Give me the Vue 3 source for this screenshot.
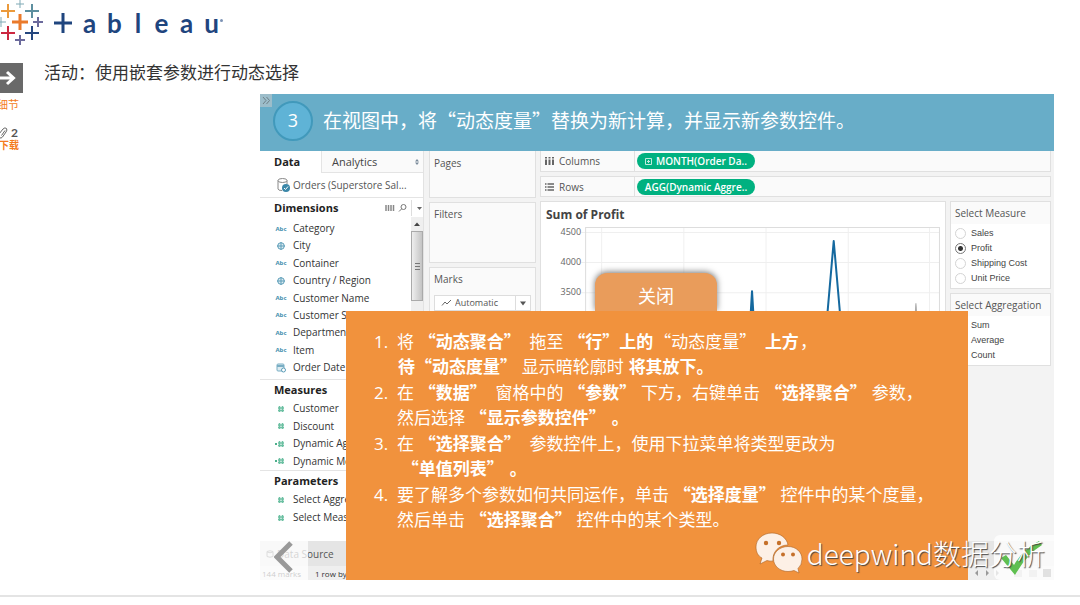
<script setup>
import { ref } from 'vue'

const crosses = [
  { x: 8, y: 11, r: 7, w: 2, c: '#eb9a3c' },
  { x: 20, y: 4, r: 4, w: 1, c: '#7fa9b5' },
  { x: 32, y: 11, r: 7, w: 2, c: '#5d8f9f' },
  { x: 1, y: 22, r: 5, w: 1, c: '#7fa9b5' },
  { x: 20, y: 22, r: 8, w: 3, c: '#ea7a2b' },
  { x: 38, y: 22, r: 5, w: 2, c: '#6b6a9c' },
  { x: 8, y: 33, r: 7, w: 2, c: '#cc2740' },
  { x: 32, y: 33, r: 7, w: 2, c: '#25477f' },
  { x: 20, y: 40, r: 5, w: 2, c: '#6b6a9c' }
]
const letters = ['a', 'b', 'l', 'e', 'a', 'u']

const dimensions = [
  { name: 'Category', kind: 'abc' },
  { name: 'City', kind: 'geo' },
  { name: 'Container', kind: 'abc' },
  { name: 'Country / Region', kind: 'geo' },
  { name: 'Customer Name', kind: 'abc' },
  { name: 'Customer Segment', kind: 'abc' },
  { name: 'Department', kind: 'abc' },
  { name: 'Item', kind: 'abc' },
  { name: 'Order Date', kind: 'date' }
]
const measures = [
  { name: 'Customer', calc: false },
  { name: 'Discount', calc: false },
  { name: 'Dynamic Aggregation', calc: true },
  { name: 'Dynamic Measure', calc: true }
]
const parameters = [
  { name: 'Select Aggregation', calc: false },
  { name: 'Select Measure', calc: false }
]
const measureOptions = ['Sales', 'Profit', 'Shipping Cost', 'Unit Price']
const aggregationOptions = ['Sum', 'Average', 'Count']
const measure = ref('Profit')
const aggregation = ref('Sum')
const ticks = [
  { label: '4500', y: 9 },
  { label: '4000', y: 39 },
  { label: '3500', y: 69 }
]
const columns = [60, 142, 224, 306, 387]
</script>

<template>
  <div class="page">
    <header class="brand" aria-label="tableau">
      <svg class="mark" width="44" height="45" viewBox="0 0 44 45">
        <path v-for="(c, i) in crosses" :key="i" :d="`M${c.x - c.r} ${c.y}H${c.x + c.r}M${c.x} ${c.y - c.r}V${c.y + c.r}`" :stroke="c.c" :stroke-width="c.w" />
      </svg>
      <svg class="plus" width="18" height="20" viewBox="0 0 18 20"><path d="M0 10H18M9 0V20" stroke="#1f457e" stroke-width="3" /></svg>
      <span class="word"><span v-for="(l, i) in letters" :key="i">{{ l }}</span></span>
      <span class="reg"></span>
    </header>

    <div class="body">
      <nav class="rail">
        <button class="expand" aria-label="展开">
          <svg width="16" height="16" viewBox="0 0 16 16"><path d="M0 8H13M7 2L13.500 8L7 14" fill="none" stroke="#fff" stroke-width="3" /></svg>
        </button>
        <a class="detail" href="#">细节</a>
        <div class="clip">
          <svg width="9" height="12" viewBox="0 0 9 12"><path d="M0 7L4 2Q6 0 7.500 1.500Q8.500 3 7 5L3.500 10Q2 12 .5 10.500M2.500 8.500L6 3.500" fill="none" stroke="#666" /></svg>
          <b>2</b>
        </div>
        <a class="download" href="#">下载</a>
      </nav>

      <main class="content">
        <h1>活动：使用嵌套参数进行动态选择</h1>

        <section class="stage">
          <div class="banner">
            <button class="chev" aria-label="收起"><svg width="8" height="7" viewBox="0 0 8 7"><path d="M1 0L4 3.500L1 7M4.500 0L7.500 3.500L4.500 7" fill="none" stroke="#6f8088" /></svg></button>
            <span class="step">3</span>
            <h2>在视图中，将“动态度量”替换为新计算，并显示新参数控件。</h2>
          </div>

          <div class="workbook">
            <aside class="data">
              <div class="tabs"><button class="tab on">Data</button><button class="tab off">Analytics<svg width="4" height="6" viewBox="0 0 4 6"><path d="M2 0L4 2.500H0ZM2 6L0 3.500H4Z" fill="#79899a" /></svg></button></div>
              <div class="source">
                <svg width="13" height="14" viewBox="0 0 13 14"><ellipse cx="5.500" cy="2.500" rx="4.500" ry="2" fill="#fff" stroke="#888" /><path d="M1 2.500V11Q1 12.500 5 12.500M10 2.500V6" fill="none" stroke="#888" /><circle cx="9" cy="10" r="4" fill="#3b87a8" /><path d="M7 10L8.500 11.500L11 8.500" fill="none" stroke="#fff" /></svg>
                <span>Orders (Superstore Sal...</span>
              </div>
              <div class="head rule">
                <h3>Dimensions</h3>
                <svg width="38" height="16" viewBox="0 0 38 16"><path d="M1 5V11M3.500 5V11M6 5V11M8.500 5V11" stroke="#888" stroke-width="1.500" /><circle cx="18.500" cy="7" r="2.500" fill="none" stroke="#777" /><path d="M16.500 9L14 11.500" stroke="#777" /><path d="M26.500 0V16" stroke="#ddd" /><path d="M32 7H37L34.500 10Z" fill="#666" /></svg>
              </div>
              <div class="scroller">
                <ul class="fields dims">
                  <li v-for="d in dimensions" :key="d.name">
                    <span class="ico">
                      <span v-if="d.kind === 'abc'" class="abc">Abc</span>
                      <svg v-else-if="d.kind === 'geo'" width="8" height="8" viewBox="0 0 8 8"><circle cx="4" cy="4" r="3.300" fill="#dcebf1" stroke="#5c9db8" /><path d="M0 4H8M4 0V8" stroke="#5c9db8" /></svg>
                      <svg v-else width="10" height="10" viewBox="0 0 10 10"><rect x="1" y="1" width="7" height="7" rx="1" fill="#dcebf1" stroke="#79aec4" /><path d="M1 3H8" stroke="#79aec4" stroke-width="2" /><circle cx="7.500" cy="7" r="2" fill="#fff" stroke="#5c9db8" /></svg>
                    </span>{{ d.name }}
                  </li>
                </ul>
                <div class="track">
                  <svg width="12" height="14" viewBox="0 0 12 14"><path d="M3 9H9L6 5.500Z" fill="#444" /></svg>
                  <div class="thumb"><i></i><i></i><i></i></div>
                </div>
              </div>
              <div class="head rule"><h3>Measures</h3></div>
              <ul class="fields meas">
                <li v-for="m in measures" :key="m.name"><span class="ico"><svg width="14" height="8" viewBox="0 0 14 8"><path v-if="m.calc" d="M1 4H3" stroke="#4eb08c" stroke-width="2" /><path d="M4 3H10M4 5.500H10M5.500 1V7M8.500 1V7" stroke="#6cc0a2" stroke-width="1.500" /></svg></span>{{ m.name }}</li>
              </ul>
              <div class="head rule"><h3>Parameters</h3></div>
              <ul class="fields params">
                <li v-for="p in parameters" :key="p.name"><span class="ico"><svg width="14" height="8" viewBox="0 0 14 8"><path d="M4 3H10M4 5.500H10M5.500 1V7M8.500 1V7" stroke="#6cc0a2" stroke-width="1.500" /></svg></span>{{ p.name }}</li>
              </ul>
            </aside>

            <div class="cards">
              <div class="card pages">Pages</div>
              <div class="card filters">Filters</div>
              <div class="card marks">
                <label for="mark-type">Marks</label>
                <div class="picker">
                  <svg class="wave" width="11" height="8" viewBox="0 0 11 8"><path d="M1 6.500L4 3L6 5L10 1" fill="none" stroke="#666" /></svg>
                  <select id="mark-type"><option>Automatic</option></select>
                  <svg class="drop" width="15" height="14" viewBox="0 0 15 14"><path d="M.5 0V14" stroke="#ddd" /><path d="M5 5.500H11L8 9.500Z" fill="#555" /></svg>
                </div>
              </div>
            </div>

            <div class="canvas">
              <div class="shelf">
                <span class="name"><svg width="9" height="8" viewBox="0 0 9 8"><path d="M1 0V1.500M4.500 0V1.500M8 0V1.500M1 2.500V8M4.500 2.500V8M8 2.500V8" stroke="#666" stroke-width="2" /></svg>Columns</span>
                <span class="pill"><svg width="7" height="7" viewBox="0 0 7 7"><path d="M.5 .5H6.500V6.500H.5ZM2 3.500H5M3.500 2V5" fill="none" stroke="#bfeadd" /></svg>MONTH(Order Da..</span>
              </div>
              <div class="shelf">
                <span class="name"><svg width="9" height="8" viewBox="0 0 9 8"><path d="M0 1H1.500M0 4H1.500M0 7H1.500M2.500 1H9M2.500 4H9M2.500 7H9" stroke="#666" stroke-width="1.500" /></svg>Rows</span>
                <span class="pill">AGG(Dynamic Aggre..</span>
              </div>
              <div class="lower">
                <div class="view">
                  <h4>Sum of Profit</h4>
                  <svg class="chart" viewBox="0 0 403 110">
                    <path v-for="x in columns" :key="x" :d="`M${x + 0.5} 4V110`" stroke="#f0f0f0" />
                    <path v-for="t in ticks" :key="t.y" :d="`M40 ${t.y + 0.5}H397`" stroke="#efefef" />
                    <path d="M44.500 110V4.500H397.500V110" fill="none" stroke="#ddd" />
                    <text v-for="t in ticks" :key="t.label" x="40" :y="t.y + 3" text-anchor="end">{{ t.label }}</text>
                    <path d="M208 110L210.500 68L213 110M284 110L292 18L300 110" fill="none" stroke="#15699f" stroke-width="2" stroke-linejoin="round" />
                    <path d="M208 110L210.500 68L213 110Z" fill="#15699f" />
                    <path d="M372 110L374 80L376 110Z" fill="#aaa" stroke="#aaa" />
                  </svg>
                </div>
                <div class="controls">
                  <fieldset class="control">
                    <legend>Select Measure</legend>
                    <label v-for="o in measureOptions" :key="o"><input v-model="measure" type="radio" name="measure" :value="o" />{{ o }}</label>
                  </fieldset>
                  <fieldset class="control">
                    <legend>Select Aggregation</legend>
                    <label v-for="o in aggregationOptions" :key="o"><input v-model="aggregation" type="radio" name="aggregation" :value="o" />{{ o }}</label>
                  </fieldset>
                </div>
              </div>
            </div>
          </div>

          <footer class="foot">
            <div class="sheets"><svg width="8" height="8" viewBox="0 0 8 8"><path d="M1 1.500Q4 0 7 1.500V6.500Q4 8 1 6.500ZM1 2Q4 3.500 7 2" fill="none" stroke="#777" /></svg>Data Source</div>
            <div class="status"><span>144 marks</span><span>1 row by 1 column</span>
              <svg class="pager" width="90" height="10" viewBox="0 0 90 10"><path d="M7 2V8L4 5ZM17 2V8L14 5ZM25 2V8L28 5ZM35 2V8L38 5Z" fill="#999" /><path d="M53 2h8v7h-8zM68 2h8v7h-8z" fill="#ccc" /><path d="M82 1h8v8h-8z" fill="#888" /></svg>
            </div>
          </footer>

          <div class="hint" role="dialog">
            <button class="close">关闭</button>
            <ol>
              <li>将 <b>“动态聚合”</b>&nbsp; 拖至 <b>“行”上的</b>“动态度量”&nbsp; <b>上方</b>，<br /><b>待“动态度量”</b> 显示暗轮廓时 <b>将其放下。</b></li>
              <li>在 <b>“数据”</b>&nbsp; 窗格中的 <b>“参数”</b> 下方，右键单击 <b>“选择聚合”</b> 参数，<br />然后选择 <b>“显示参数控件”</b> <b>。</b></li>
              <li>在 <b>“选择聚合”</b>&nbsp; 参数控件上，使用下拉菜单将类型更改为<br />&nbsp;<b>“单值列表”</b> <b>。</b></li>
              <li>要了解多个参数如何共同运作，单击 <b>“选择度量”</b> 控件中的某个度量，<br />然后单击 <b>“选择聚合”</b> 控件中的某个类型。</li>
            </ol>
          </div>

          <button class="nav prev" aria-label="上一步"><svg width="20" height="32" viewBox="0 0 20 32"><path d="M17 2L3 16L17 30" fill="none" stroke="#999" stroke-width="5" /></svg></button>
          <button class="nav next" aria-label="完成"><svg width="42" height="36" viewBox="0 0 42 36"><path d="M0 18L5 15L13 25Q22 9 38 1L41 5Q26 14 14 35Z" fill="#5fbf50" /></svg></button>

          <div class="watermark">
            <svg width="48" height="42" viewBox="0 0 48 42">
              <path d="M17 1C8 1 1 7 1 15C1 20 3 24 7 26L5 32L12 28.500Q15 29.500 18 29C17 20 24 13 33 13C32 6 25 1 17 1Z" fill="#fdf0e6" stroke="#a96224" stroke-width=".6" />
              <path d="M33 14.500C25 14.500 18.500 20 18.500 27C18.500 34 25 39.500 33 39.500Q36 39.500 39 38.500L44 41L43 36.500Q47 33 47 27C47 20 41 14.500 33 14.500Z" fill="#fdf0e6" stroke="#a96224" stroke-width=".6" />
              <g fill="#c5702a"><circle cx="11" cy="11" r="2.200" /><circle cx="24" cy="11" r="2.200" /><circle cx="28" cy="22.500" r="2" /><circle cx="38" cy="22.500" r="2" /></g>
            </svg>
            <span>deepwind数据分析</span>
          </div>
        </section>
      </main>
    </div>
  </div>
</template>

<style>
body { background: #fff; }
</style>

<style scoped>
.page, .page button, .page select { font-family: "Noto Sans CJK SC", "Noto Sans", sans-serif; }
.page { overflow: hidden; border-bottom: 2px solid #e4e4e4; padding-bottom: 15px; color: #444; }
.page * { box-sizing: border-box; }
button { border: 0; padding: 0; background: none; color: inherit; }
h1, h2, h3, h4, ul, ol, fieldset { margin: 0; padding: 0; border: 0; }
ul { list-style: none; }
svg { display: block; flex: none; }
a { text-decoration: none; }

.brand { display: flex; align-items: center; height: 45px; }
.plus { margin-left: 10px; }
.word { display: flex; gap: 10px; margin-left: 10px; font: 700 26px/28px Lato, sans-serif; color: #1f457e; }
.word span { width: 15px; text-align: center; }
.word span:nth-child(3) { width: 12px; }
.reg { width: 3px; height: 3px; border-radius: 50%; background: #7d93b5; margin: 0 0 4px 1px; }

.body { display: flex; }
.rail { flex: none; width: 24px; padding-top: 18px; overflow: hidden; }
.expand { display: flex; align-items: center; justify-content: flex-start; width: 23px; height: 30px; background: #696969; }
.rail a, .clip { display: flex; justify-content: flex-end; width: 19px; color: #f47b20; white-space: nowrap; }
.detail { font-size: 11px; line-height: 22px; }
.clip { align-items: center; gap: 3px; margin-top: 12px; padding-right: 1px; height: 12px; }
.clip b { font: 700 12px/12px Lato, sans-serif; color: #555; }
.rail .download { font-size: 10px; font-weight: 700; line-height: 12px; }
.content { flex: 1; min-width: 0; padding-left: 20px; }
h1 { padding-top: 14px; font-size: 17px; line-height: 26px; font-weight: 400; color: #333; }

.stage { position: relative; margin: 9px 26px 0 216px; background: #f3f3f3; font-family: "Open Sans", "Noto Sans", sans-serif; overflow: hidden; }
.banner { position: relative; display: flex; align-items: center; gap: 10px; height: 57px; padding: 0 13px; background: #68adc8; color: #fff; }
.chev { position: absolute; left: 0; top: 0; width: 12px; height: 13px; display: flex; align-items: center; justify-content: center; background: #9cbdca; }
.step { display: flex; align-items: center; justify-content: center; width: 40px; height: 40px; margin-bottom: 4px; padding-bottom: 2px; border: 2px solid #4199bb; border-radius: 50%; background: #5fb3d6; font: 18px/20px "Open Sans", sans-serif; }
h2 { font: 400 19px/28px "Noto Sans CJK SC", sans-serif; margin-bottom: 6px; white-space: nowrap; }

.workbook { display: flex; height: 390px; }
.data { flex: none; width: 164px; background: #fff; border-right: 1px solid #e2e2e2; }
.tabs { display: flex; height: 22px; }
.data .tab { font: 11px/20px "Open Sans", sans-serif; text-align: left; }
.data .tab.on { width: 61px; padding-left: 14px; font-weight: 700; color: #222; }
.data .tab.off { flex: 1; display: flex; align-items: center; justify-content: space-between; padding: 0 4px 0 10px; background: #fafafa; border-left: 1px solid #e4e4e4; border-bottom: 1px solid #e4e4e4; color: #444; }
.source { display: flex; align-items: center; gap: 3px; height: 24px; padding-left: 17px; font: 10px/14px "Open Sans", sans-serif; color: #555; white-space: nowrap; }
.head { display: flex; align-items: center; justify-content: space-between; height: 20px; padding-left: 14px; }
.rule { border-top: 1px solid #e4e4e4; }
h3 { font: 700 11px/16px "Open Sans", sans-serif; color: #222; }
.scroller { display: flex; height: 162px; }
.fields { flex: 1; display: grid; align-content: space-between; margin-top: 1px; overflow: hidden; font: 10px/17px "Open Sans", sans-serif; color: #333; white-space: nowrap; }
.fields li { display: flex; height: 17px; }
.ico { display: flex; align-items: center; justify-content: center; flex: none; width: 20px; margin: 0 2px 0 11px; }
.abc { font: 700 6px/8px "Open Sans", sans-serif; color: #3f8fae; }
.dims { height: 156px; margin-top: 3px; }
.meas { height: 70px; }
.params { height: 35px; }
.track { width: 12px; background: #efefef; }
.thumb { height: 70px; display: flex; flex-direction: column; align-items: center; justify-content: center; gap: 2px; border: 1px solid #aaa; background: linear-gradient(90deg, #eee, #c4c4c4); }
.thumb i { width: 5px; height: 1px; background: #777; }

.cards { flex: none; display: flex; flex-direction: column; gap: 4px; width: 107px; margin-left: 5px; color: #555; font-size: 10px; line-height: 14px; }
.card { border: 1px solid #e0e0e0; background: #fafafa; padding: 4px; }
.pages { height: 47px; border-top: 0; padding-top: 5px; }
.filters { height: 61px; }
.marks { flex: 1; }
.picker { position: relative; margin-top: 9px; }
.picker select { appearance: none; display: block; width: 100%; height: 16px; padding: 0 16px 0 20px; border: 1px solid #ddd; border-radius: 0; background: #fff; font: 9px/12px "Open Sans", sans-serif; color: #555; }
.wave { position: absolute; left: 7px; top: 4px; }
.drop { position: absolute; right: 1px; top: 1px; }

.canvas { flex: 1; min-width: 0; display: flex; flex-direction: column; gap: 4px; margin: 0 3px 0 4px; }
.shelf { display: flex; align-items: center; height: 21px; border: 1px solid #e0e0e0; background: #fafafa; }
.shelf:first-child { border-top: 0; }
.name { display: flex; align-items: center; gap: 5px; align-self: stretch; width: 94px; padding-left: 4px; border-right: 1px solid #e0e0e0; font-size: 10px; color: #555; }
.pill { display: flex; align-items: center; justify-content: center; gap: 4px; width: 118px; height: 16px; margin-left: 2px; border-radius: 8px; background: #00b180; color: #fff; font: 600 10px/14px "Open Sans", sans-serif; white-space: nowrap; }
.lower { flex: 1; display: flex; gap: 4px; min-height: 0; }
.view { flex: 1; min-width: 0; overflow: hidden; border: 1px solid #e0e0e0; background: #fff; }
h4 { padding: 5px 5px 0; font: 700 12px/16px "Open Sans", sans-serif; color: #444; }
.chart { width: 100%; }
.chart text { font: 9px "Open Sans", sans-serif; fill: #666; }
.controls { width: 101px; display: flex; flex-direction: column; gap: 4px; }
.control { min-width: 0; border: 1px solid #e0e0e0; background: #fff; padding-bottom: 2px; font: 9px/15px "Liberation Sans", sans-serif; color: #444; }
.control legend { float: left; width: 100%; padding: 3px 4px; margin-bottom: 2px; background: #fafafa; font: 10px/16px "Open Sans", sans-serif; color: #555; white-space: nowrap; }
.control label { display: flex; align-items: center; gap: 5px; clear: both; height: 15px; padding-left: 4px; white-space: nowrap; }
.control input { appearance: none; flex: none; width: 11px; height: 11px; margin: 0; border: 1px solid #d4d4d4; border-radius: 50%; background: #fff; }
.control input:checked { border-color: #777; background: radial-gradient(circle, #333 2px, #fff 3px); }

.foot { color: #555; font-size: 9px; }
.sheets { display: flex; align-items: center; gap: 3px; height: 25px; padding-left: 6px; background: #e5e5e5; font-size: 10px; }
.status { display: flex; align-items: center; gap: 14px; height: 14px; padding-left: 2px; background: #efefef; font-size: 8px; white-space: nowrap; color: #333; }
.pager { margin-left: auto; margin-right: 3px; }

.hint { position: absolute; left: 86px; right: 86px; bottom: 0; display: flex; flex-direction: column; align-items: flex-start; }
.close { width: 122px; height: 38px; margin-left: 249px; padding-top: 6px; border-radius: 12px 12px 0 0; background: #e99c5b; color: #fff; font-size: 18px; line-height: 26px; box-shadow: 0 -1px 6px #777; }
ol { position: relative; align-self: stretch; padding: 17px 0 48px 51px; background: #f1923d; color: #fff; font: 17px/25px "Noto Sans CJK SC", sans-serif; white-space: nowrap; list-style: none; counter-reset: step; }
ol li { margin-bottom: 1px; counter-increment: step; }
ol li::before { content: counter(step) "."; display: inline-block; width: 23px; margin-left: -23px; font-family: "Open Sans", sans-serif; line-height: 20px; }
ol b { margin: 0 1px; }

.nav { position: absolute; bottom: 0; display: flex; align-items: center; background: rgba(255, 255, 255, .75); }
.prev { left: 0; width: 48px; height: 46px; padding-left: 14px; border-radius: 0 6px 0 0; }
.next { right: 0; width: 60px; height: 45px; padding-left: 7px; border-radius: 6px 0 0 6px; }
.watermark { position: absolute; right: 9px; bottom: 6px; display: flex; align-items: center; gap: 4px; color: #fff; font: 300 28px/42px "Noto Sans CJK SC", sans-serif; text-shadow: 1px 1px 1px #444; white-space: nowrap; }
</style>
